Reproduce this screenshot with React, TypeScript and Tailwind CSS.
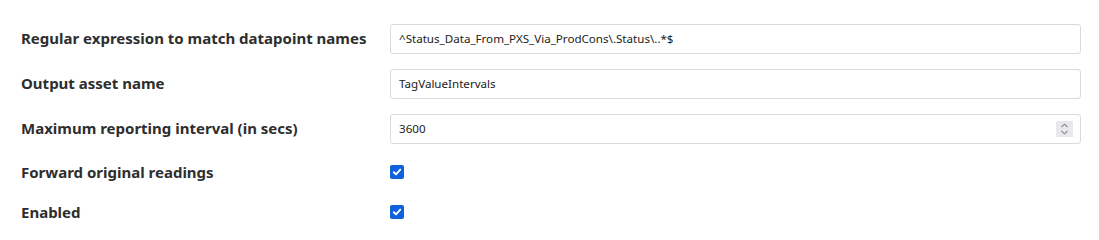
import React from "react";

function Check() {
  return (
    <div className="w-[14px] h-[14px] rounded-[2px] bg-[#0f62d9] flex items-center justify-center">
      <svg width="10" height="10" viewBox="0 0 10 10" fill="none">
        <path d="M1.8 5.2 L4 7.3 L8.3 2.6" stroke="white" strokeWidth="1.9" strokeLinecap="round" strokeLinejoin="round" />
      </svg>
    </div>
  );
}

function Label({ children }: { children: React.ReactNode }) {
  return (
    <div className="w-[369px] shrink-0 text-[15px] font-bold text-[#2e2e2e] leading-none">{children}</div>
  );
}

function TextInput({ value, spinner }: { value: string; spinner?: boolean }) {
  return (
    <div className="flex-1 h-[30px] border border-[#dadada] rounded-[3px] bg-white flex items-center pl-[8px] pr-[7px]">
      <span className="flex-1 text-[11.6px] text-[#222222]">{value}</span>
      {spinner && (
        <div className="w-[17px] h-[16px] bg-[#e9e9ed] flex items-center justify-center">
          <svg width="9" height="12" viewBox="0 0 9 12" fill="none">
            <path d="M1.5 4 L4.5 1.2 L7.5 4" stroke="#8a8a8e" strokeWidth="1.1" />
            <path d="M1.5 8 L4.5 10.8 L7.5 8" stroke="#8a8a8e" strokeWidth="1.1" />
          </svg>
        </div>
      )}
    </div>
  );
}

export default function App() {
  return (
    <div
      className="w-[1099px] h-[240px] bg-white pt-[24px] pl-[21px] pr-[18px]"
      style={{ fontFamily: '"Noto Sans", "Open Sans", sans-serif' }}
    >
      <div className="flex flex-col">
        <div className="flex items-center h-[29px]">
          <Label>Regular expression to match datapoint names</Label>
          <TextInput value="^Status_Data_From_PXS_Via_ProdCons\.Status\..*$" />
        </div>
        <div className="flex items-center h-[29px] mt-[16px]">
          <Label>Output asset name</Label>
          <TextInput value="TagValueIntervals" />
        </div>
        <div className="flex items-center h-[29px] mt-[16px]">
          <Label>Maximum reporting interval (in secs)</Label>
          <TextInput value="3600" spinner />
        </div>
        <div className="flex items-center h-[24px] mt-[17px]">
          <Label>Forward original readings</Label>
          <Check />
        </div>
        <div className="flex items-center h-[24px] mt-[16px]">
          <Label>Enabled</Label>
          <Check />
        </div>
      </div>
    </div>
  );
}
